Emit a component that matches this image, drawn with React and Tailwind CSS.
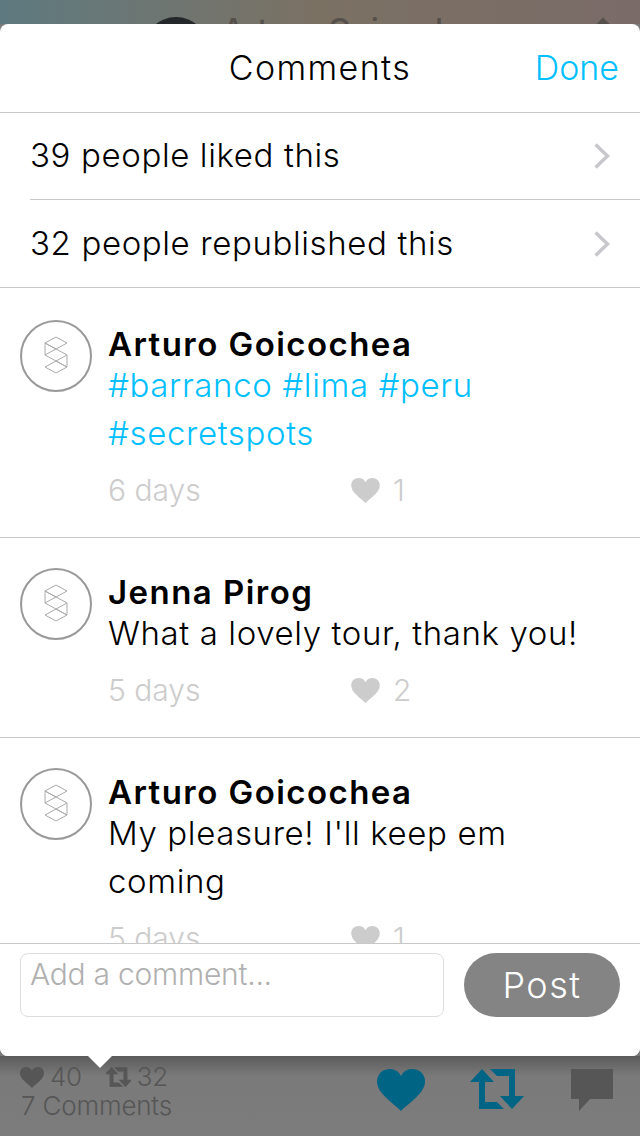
import React from "react";

const Heart = ({ className }) => (
  <svg viewBox="0 0 48 42" className={className} fill="currentColor">
    <path d="M24 42C15 33 0 24 0 12.5 0 5 5.500 0 12.500 0 17.500 0 22 2.500 24 7 26 2.500 30.500 0 35.500 0 42.500 0 48 5 48 12.500 48 24 33 33 24 42Z" />
  </svg>
);

const Repost = ({ className }) => (
  <svg viewBox="0 0 54 40" className={className} fill="currentColor">
    <path d="M12 0 24 13 15 13 15 33 27 33 34 40 9 40 9 13 0 13Z" />
    <path d="M20 0 45 0 45 27 54 27 42 40 30 27 39 27 39 7 27 7Z" />
  </svg>
);

const Logo = () => (
  <svg viewBox="0 0 72 72" className="w-[72px] h-[72px] shrink-0" fill="none">
    <circle cx="36" cy="36" r="35" stroke="#999999" strokeWidth="2" />
    <path
      d="M36 17 47 23 36 29 25 23ZM25 23V35L47 47V35L25 23ZM25 35 36 29M47 35 36 41 25 47 36 53 47 47 36 41"
      stroke="#aaaaaa"
      strokeWidth="1"
      strokeLinejoin="round"
    />
  </svg>
);

const Chevron = () => (
  <svg viewBox="0 0 16 26" className="w-4 h-[26px]" fill="none">
    <path d="M1.500 1.500 13.500 13 1.500 24.500" stroke="#c8c8cc" strokeWidth="3.500" />
  </svg>
);

const Row = ({ text, h }) => (
  <div className={`flex items-center justify-between pr-[30px] pl-[30px] ${h}`}>
    <span className="text-[33px] text-black font-light tracking-[0.62px]">{text}</span>
    <Chevron />
  </div>
);

const Comment = ({ name, lines, blue, time, likes, pt, h }) => (
  <div className={`flex items-start pl-5 shrink-0 border-b border-[#c8c8c8] ${pt} ${h}`}>
    <Logo />
    <div className="ml-4 flex-1 flex flex-col">
      <div className="h-[41px] leading-[48px] text-[33px] tracking-[1.45px] font-semibold text-black">{name}</div>
      <div className={`text-[33px] leading-[48px] tracking-[0.62px] font-light ${blue ? "text-[#00bfff]" : "text-black"}`}>
        {lines.map((l) => (
          <div key={l}>{l}</div>
        ))}
      </div>
      <div className="flex items-center h-10 mt-[13px] text-[#cccccc] text-[30px] font-light">
        <span className="w-[243px]">{time}</span>
        <Heart className="w-[29px] h-[25px]" />
        <span className="ml-[13px]">{likes}</span>
      </div>
    </div>
  </div>
);

export default function App() {
  return (
    <div className="w-[640px] h-[1136px] flex flex-col overflow-hidden bg-[#7b7b7b] font-['Inter',sans-serif]">
      <div className="h-6 shrink-0 overflow-hidden flex items-start bg-gradient-to-r from-[#5e7a80] via-[#7b7163] to-[#7a6b68]">
        <div className="w-16 h-16 mt-[17px] ml-[144px] shrink-0 rounded-full bg-[#25282b]" />
        <span className="ml-[14px] mt-[7px] text-[32px] leading-[48px] font-medium text-[#55504c] whitespace-nowrap">Arturo Goicochea</span>
        <div className="ml-auto mr-[31px] mt-[20px] w-3 h-3 shrink-0 rotate-45 bg-[#55504c]" />
      </div>

      <div className="h-[1032px] shrink-0 bg-white rounded-[8px] flex flex-col relative z-10">
        <div className="h-[88px] shrink-0 relative flex items-center justify-center pb-[2px]">
          <span className="text-[34px] font-light text-black tracking-[1.4px]">Comments</span>
          <span className="absolute right-[21px] text-[34px] font-light text-[#00bfff]">Done</span>
        </div>
        <div className="h-px shrink-0 bg-[#c8c8c8]" />
        <Row text="39 people liked this" h="h-[86px]" />
        <div className="h-px shrink-0 ml-[30px] bg-[#c8c8c8]" />
        <Row text="32 people republished this" h="h-[87px]" />
        <div className="h-px shrink-0 bg-[#c8c8c8]" />
        <div className="flex-1 min-h-0 overflow-hidden flex flex-col">
          <Comment pt="pt-8" h="h-[250px]" name="Arturo Goicochea" blue lines={["#barranco #lima #peru", "#secretspots"]} time="6 days" likes="1" />
          <Comment pt="pt-[30px]" h="h-[200px]" name="Jenna Pirog" lines={["What a lovely tour, thank you!"]} time="5 days" likes="2" />
          <Comment pt="pt-[30px]" h="h-[248px]" name="Arturo Goicochea" lines={["My pleasure! I'll keep em", "coming"]} time="5 days" likes="1" />
        </div>
        <div className="h-[113px] shrink-0 border-t border-[#c8c8c8] bg-white rounded-b-[8px] flex items-start px-5 pt-[9px]">
          <div className="w-[424px] h-16 rounded-[8px] border border-[#dddddd] px-[9px] text-[30px] leading-10 font-light tracking-[-0.25px] text-[#b0b0b0]">
            Add a comment...
          </div>
          <div className="ml-5 w-[156px] h-16 rounded-full bg-[#848484] flex items-center justify-center text-[36px] font-light tracking-[1.5px] text-white">
            Post
          </div>
        </div>
        <div className="absolute left-[88px] top-full w-6 h-3 bg-white [clip-path:polygon(0_0,100%_0,50%_100%)]" />
      </div>

      <div className="flex-1 bg-gradient-to-b from-[#5c5c5c] via-[#7a7a7a] via-25% to-[#7c7c7c] flex items-start justify-between pl-5 pr-[27px] pt-[10px]">
        <div className="flex flex-col text-[#565656] font-light text-[26px] leading-8">
          <div className="flex items-center h-[22px]">
            <Heart className="w-6 h-[21px]" />
            <span className="ml-[6px] leading-[22px] tracking-[-0.3px]">40</span>
            <Repost className="w-[25px] h-5 ml-[24px] stroke-current stroke-[2.500px]" />
            <span className="ml-[6px] leading-[22px] tracking-[-0.3px]">32</span>
          </div>
          <div className="mt-[2px] h-8 ml-px tracking-[-0.2px]">7 Comments</div>
        </div>
        <div className="flex items-start pt-[3px]">
          <Heart className="w-12 h-[42px] text-[#006484]" />
          <Repost className="w-[54px] h-[40px] ml-[45px] text-[#006484]" />
          <svg viewBox="0 0 42 42" className="w-[42px] h-[42px] ml-[47px] text-[#565656]" fill="currentColor">
            <path d="M0 0H42V30H19L8 42V30H0Z" />
          </svg>
        </div>
      </div>
    </div>
  );
}
